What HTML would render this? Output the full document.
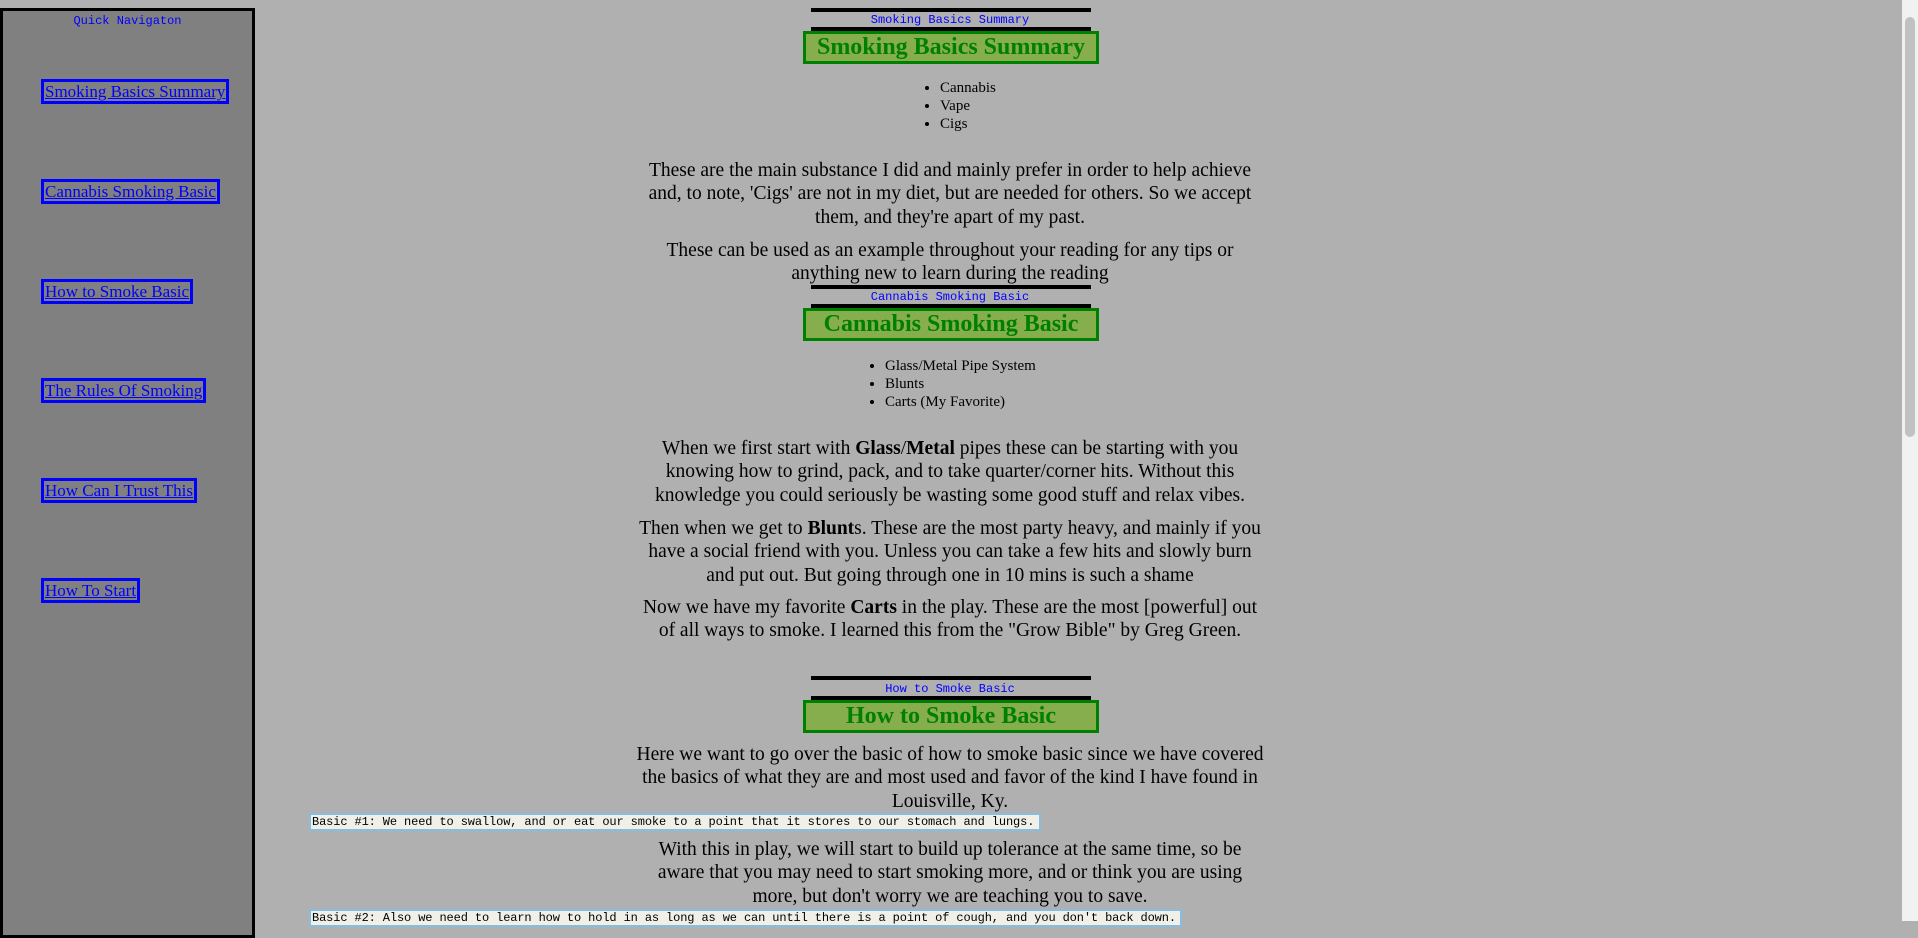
<!DOCTYPE html>
<html><head><meta charset="utf-8"><style>
*{margin:0;padding:0;box-sizing:border-box}
body{width:1918px;height:921px;overflow:hidden;background:#b0b0b0;font-family:"Liberation Serif",serif;position:relative;color:#000}
.nav{position:absolute;left:0;top:8px;width:255px;height:930px;background:#808080;border:3px solid #000}
.qn{position:absolute;left:0;width:249px;top:3px;text-align:center;font:12px "Liberation Mono",monospace;color:#00f}
.nl{position:absolute;left:41px;border:3px solid #00f;color:#00f;text-decoration:underline;font-size:17px;line-height:19px;padding:0 1px;white-space:nowrap}
.bar{position:absolute;left:811px;width:280px;height:4px;background:#000}
.sl{position:absolute;left:750px;width:400px;text-align:center;font:12px "Liberation Mono",monospace;color:#00f;line-height:14px}
.h{position:absolute;left:803px;width:296px;height:33px;background:#86ae4c;border:3px solid #008000;color:#008000;font-weight:bold;font-size:24px;line-height:27px;text-align:center;white-space:nowrap}
ul{position:absolute;left:940px;font-size:15px;line-height:18px;list-style:disc;white-space:nowrap}
.p{position:absolute;left:550px;width:800px;text-align:center;font-size:19.5px;line-height:23.3px;white-space:nowrap}
.b{position:absolute;left:309px;height:18px;background:#f0f0e8;border:2px solid #87bde0;font:12px "Liberation Mono",monospace;line-height:14px;padding:0 1px;white-space:nowrap;overflow:hidden;letter-spacing:-0.12px}
.sb{position:absolute;right:0;top:0;width:16px;height:921px;background:#f1f1f1}
.th{position:absolute;right:3px;top:17px;width:10px;height:420px;background:#c1c1c1;border-radius:5px}
</style></head><body>
<div class="nav"><div class="qn">Quick Navigaton</div></div>
<div class="nl" style="top:79px">Smoking Basics Summary</div>
<div class="nl" style="top:179px">Cannabis Smoking Basic</div>
<div class="nl" style="top:279px">How to Smoke Basic</div>
<div class="nl" style="top:378px">The Rules Of Smoking</div>
<div class="nl" style="top:478px">How Can I Trust This</div>
<div class="nl" style="top:578px">How To Start</div>

<div class="bar" style="top:8px"></div>
<div class="sl" style="top:13px">Smoking Basics Summary</div>
<div class="bar" style="top:27px"></div>
<div class="h" style="top:31px">Smoking Basics Summary</div>
<ul style="top:79px"><li>Cannabis</li><li>Vape</li><li>Cigs</li></ul>
<div class="p" style="top:159px">These are the main substance I did and mainly prefer in order to help achieve<br>and, to note, 'Cigs' are not in my diet, but are needed for others. So we accept<br>them, and they're apart of my past.</div>
<div class="p" style="top:239px">These can be used as an example throughout your reading for any tips or<br>anything new to learn during the reading</div>

<div class="bar" style="top:285px"></div>
<div class="sl" style="top:290px">Cannabis Smoking Basic</div>
<div class="bar" style="top:304px"></div>
<div class="h" style="top:308px">Cannabis Smoking Basic</div>
<ul style="top:357px;left:885px"><li>Glass/Metal Pipe System</li><li>Blunts</li><li>Carts (My Favorite)</li></ul>
<div class="p" style="top:437px">When we first start with <b>Glass</b>/<b>Metal</b> pipes these can be starting with you<br>knowing how to grind, pack, and to take quarter/corner hits. Without this<br>knowledge you could seriously be wasting some good stuff and relax vibes.</div>
<div class="p" style="top:517px">Then when we get to <b>Blunt</b>s. These are the most party heavy, and mainly if you<br>have a social friend with you. Unless you can take a few hits and slowly burn<br>and put out. But going through one in 10 mins is such a shame</div>
<div class="p" style="top:596px">Now we have my favorite <b>Carts</b> in the play. These are the most [powerful] out<br>of all ways to smoke. I learned this from the "Grow Bible" by Greg Green.</div>

<div class="bar" style="top:676px"></div>
<div class="sl" style="top:682px">How to Smoke Basic</div>
<div class="bar" style="top:696px"></div>
<div class="h" style="top:700px">How to Smoke Basic</div>
<div class="p" style="top:743px">Here we want to go over the basic of how to smoke basic since we have covered<br>the basics of what they are and most used and favor of the kind I have found in<br>Louisville, Ky.</div>
<div class="b" style="top:813px;width:732px">Basic #1: We need to swallow, and or eat our smoke to a point that it stores to our stomach and lungs.</div>
<div class="p" style="top:838px">With this in play, we will start to build up tolerance at the same time, so be<br>aware that you may need to start smoking more, and or think you are using<br>more, but don't worry we are teaching you to save.</div>
<div class="b" style="top:909px;width:873px">Basic #2: Also we need to learn how to hold in as long as we can until there is a point of cough, and you don't back down.</div>

<div class="sb"><div class="th"></div></div>
</body></html>
